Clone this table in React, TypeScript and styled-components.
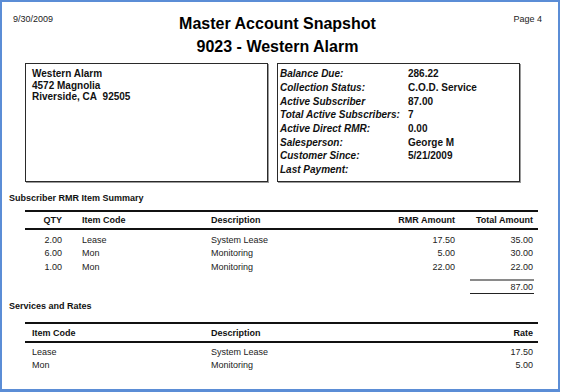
import React, { FC } from 'react'
import styled, { createGlobalStyle } from 'styled-components'

const GlobalStyle = createGlobalStyle`
  html, body {
    margin: 0;
    padding: 0;
    background: #ffffff;
  }
  body {
    font-family: 'Liberation Sans', Arial, sans-serif;
    color: #111;
  }
`

const rmrItems = [
  { qty: '2.00', code: 'Lease', description: 'System Lease', rmr: '17.50', total: '35.00' },
  { qty: '6.00', code: 'Mon', description: 'Monitoring', rmr: '5.00', total: '30.00' },
  { qty: '1.00', code: 'Mon', description: 'Monitoring', rmr: '22.00', total: '22.00' },
]

const rates = [
  { code: 'Lease', description: 'System Lease', rate: '17.50' },
  { code: 'Mon', description: 'Monitoring', rate: '5.00' },
]

const accountInfo = [
  { label: 'Balance Due:', value: '286.22' },
  { label: 'Collection Status:', value: 'C.O.D. Service' },
  { label: 'Active Subscriber', value: '87.00' },
  { label: 'Total Active Subscribers:', value: '7' },
  { label: 'Active Direct RMR:', value: '0.00' },
  { label: 'Salesperson:', value: 'George M' },
  { label: 'Customer Since:', value: '5/21/2009' },
  { label: 'Last Payment:', value: '' },
]

const App: FC = () => {
  return (
    <>
      <GlobalStyle />
      <StyledFrame>
        <StyledHeader>
          <StyledSmallText>9/30/2009</StyledSmallText>
          <StyledTitleBlock>
            <StyledTitle>Master Account Snapshot</StyledTitle>
            <StyledTitle>9023 - Western Alarm</StyledTitle>
          </StyledTitleBlock>
          <StyledPageNumber>Page 4</StyledPageNumber>
        </StyledHeader>

        <StyledBoxes>
          <StyledAddressBox>
            <div>Western Alarm</div>
            <div>4572 Magnolia</div>
            <div>Riverside, CA&nbsp; 92505</div>
          </StyledAddressBox>
          <StyledInfoBox>
            {accountInfo.map((row) => (
              <React.Fragment key={row.label}>
                <StyledInfoLabel>{row.label}</StyledInfoLabel>
                <StyledInfoValue>{row.value}</StyledInfoValue>
              </React.Fragment>
            ))}
          </StyledInfoBox>
        </StyledBoxes>

        <StyledSectionTitle $top={10}>Subscriber RMR Item Summary</StyledSectionTitle>
        <StyledTable $top={6}>
          <StyledSummaryHead>
            <StyledCell $align="right">QTY</StyledCell>
            <StyledCell $indent={20}>Item Code</StyledCell>
            <StyledCell>Description</StyledCell>
            <StyledCell $align="right">RMR Amount</StyledCell>
            <StyledCell $align="right">Total Amount</StyledCell>
          </StyledSummaryHead>
          <StyledBody $padTop={3}>
            {rmrItems.map((item, i) => (
              <StyledSummaryRow key={i}>
                <StyledCell $align="right">{item.qty}</StyledCell>
                <StyledCell $indent={20}>{item.code}</StyledCell>
                <StyledCell>{item.description}</StyledCell>
                <StyledCell $align="right">{item.rmr}</StyledCell>
                <StyledCell $align="right">{item.total}</StyledCell>
              </StyledSummaryRow>
            ))}
          </StyledBody>
          <StyledTotalWrap>
            <StyledTotal>87.00</StyledTotal>
          </StyledTotalWrap>
        </StyledTable>

        <StyledSectionTitle $top={6}>Services and Rates</StyledSectionTitle>
        <StyledTable $top={10}>
          <StyledRatesHead>
            <StyledCell $indent={7}>Item Code</StyledCell>
            <StyledCell>Description</StyledCell>
            <StyledCell $align="right">Rate</StyledCell>
          </StyledRatesHead>
          <StyledBody $padTop={2.5}>
            {rates.map((item, i) => (
              <StyledRatesRow key={i}>
                <StyledCell $indent={7}>{item.code}</StyledCell>
                <StyledCell>{item.description}</StyledCell>
                <StyledCell $align="right">{item.rate}</StyledCell>
              </StyledRatesRow>
            ))}
          </StyledBody>
        </StyledTable>
      </StyledFrame>
    </>
  )
}

export default App

const StyledFrame = styled.div`
  box-sizing: border-box;
  width: 560px;
  height: 392px;
  border: 2px solid #5b8dd6;
  border-bottom-width: 3px;
  background: #fff;
  padding-top: 10px;
  overflow: hidden;
`

const StyledHeader = styled.div`
  display: grid;
  grid-template-columns: 1fr auto 1fr;
  align-items: start;
  padding: 0 16px 0 11px;
`

const StyledSmallText = styled.div`
  font-size: 9px;
  line-height: 14px;
  color: #222;
`

const StyledPageNumber = styled(StyledSmallText)`
  justify-self: end;
`

const StyledTitleBlock = styled.div`
  text-align: center;
`

const StyledTitle = styled.div`
  font-size: 16px;
  font-weight: bold;
  line-height: 23px;
  color: #000;
`

const StyledBoxes = styled.div`
  display: flex;
  gap: 9px;
  margin: 5px 0 0 23px;
`

const StyledBox = styled.div`
  box-sizing: border-box;
  width: 243px;
  height: 119px;
  border: 1px solid #2a2a2a;
  box-shadow: 1px 1px 0 #9a9a9a;
  font-size: 10px;
  font-weight: bold;
  color: #111;
`

const StyledAddressBox = styled(StyledBox)`
  padding: 4px 0 0 6px;
  line-height: 11.5px;
`

const StyledInfoBox = styled(StyledBox)`
  display: grid;
  grid-template-columns: 128px 1fr;
  grid-auto-rows: 13.7px;
  align-items: center;
  padding: 3px 0 0 2px;
`

const StyledInfoLabel = styled.div`
  font-style: italic;
  white-space: nowrap;
`

const StyledInfoValue = styled.div`
  white-space: nowrap;
`

const StyledSectionTitle = styled.div<{ $top: number }>`
  margin: ${({ $top }) => $top}px 0 0 7px;
  font-size: 9px;
  font-weight: bold;
  line-height: 12px;
  color: #111;
`

const StyledTable = styled.div<{ $top: number }>`
  margin: ${({ $top }) => $top}px 0 0 23px;
  width: 513px;
  border-top: 2px solid #111;
  font-size: 9px;
  color: #222;
`

const summaryColumns = '37px 149px 1fr 80px 78px'
const ratesColumns = '186px 1fr 80px'

const StyledHeadRow = styled.div`
  display: grid;
  align-items: center;
  padding-right: 5px;
  border-bottom: 2px solid #111;
  font-weight: bold;
  color: #111;
`

const StyledSummaryHead = styled(StyledHeadRow)`
  grid-template-columns: ${summaryColumns};
  height: 16px;
`

const StyledRatesHead = styled(StyledHeadRow)`
  grid-template-columns: ${ratesColumns};
  height: 17px;
`

const StyledBody = styled.div<{ $padTop: number }>`
  padding-top: ${({ $padTop }) => $padTop}px;
`

const StyledRow = styled.div`
  display: grid;
  align-items: center;
  padding-right: 5px;
  height: 13.5px;
`

const StyledSummaryRow = styled(StyledRow)`
  grid-template-columns: ${summaryColumns};
`

const StyledRatesRow = styled(StyledRow)`
  grid-template-columns: ${ratesColumns};
  height: 13px;
`

const StyledCell = styled.div<{ $align?: 'left' | 'right'; $indent?: number }>`
  text-align: ${({ $align }) => $align ?? 'left'};
  padding-left: ${({ $indent }) => $indent ?? 0}px;
  white-space: nowrap;
`

const StyledTotalWrap = styled.div`
  display: flex;
  justify-content: flex-end;
  padding: 5.5px 4px 0 0;
`

const StyledTotal = styled.div`
  width: 64px;
  box-sizing: border-box;
  padding-right: 1px;
  border-top: 2px solid #8a8a8a;
  border-bottom: 1.5px solid #222;
  text-align: right;
  line-height: 12px;
`
